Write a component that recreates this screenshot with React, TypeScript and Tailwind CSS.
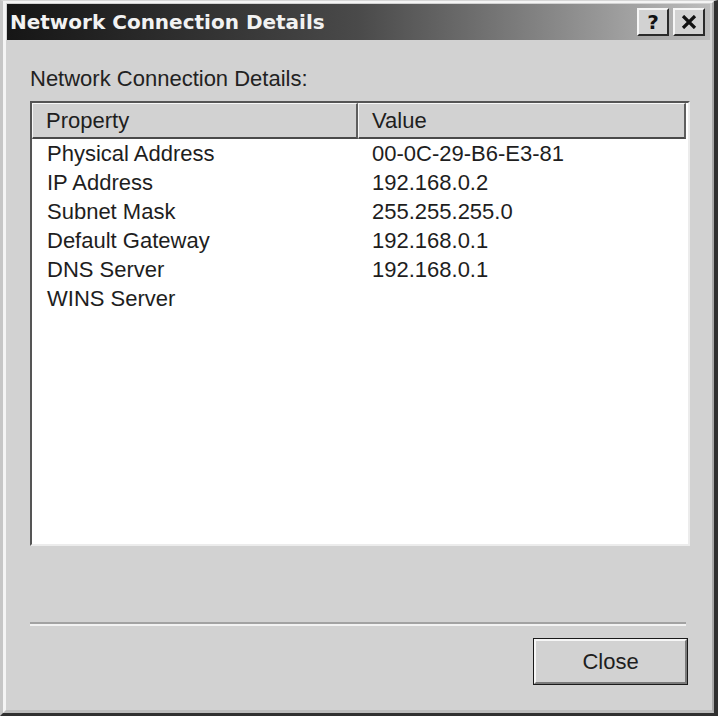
const SANS = { fontFamily: '"Liberation Sans", Arial, sans-serif' }

const ROWS = [
  { name: 'Physical Address', value: '00-0C-29-B6-E3-81' },
  { name: 'IP Address', value: '192.168.0.2' },
  { name: 'Subnet Mask', value: '255.255.255.0' },
  { name: 'Default Gateway', value: '192.168.0.1' },
  { name: 'DNS Server', value: '192.168.0.1' },
  { name: 'WINS Server', value: '' },
]

function CaptionButton({ children }: { children: React.ReactNode }) {
  return (
    <div className="flex h-[28px] w-[32px] items-center justify-center border-t-[2px] border-l-[2px] border-r-[2px] border-b-[2px] border-t-[#f6f6f6] border-l-[#f6f6f6] border-r-[#2a2a2a] border-b-[#2a2a2a] bg-[#d2d2d2]">
      {children}
    </div>
  )
}

function HeaderCell({ label, width }: { label: string; width: string }) {
  return (
    <div
      className={`${width} h-full border-t border-l border-r-[2px] border-b-[2px] border-t-[#f8f8f8] border-l-[#f8f8f8] border-r-[#5e5e5e] border-b-[#4a4a4a] bg-[#d2d2d2] pt-[2px] pl-[13px] text-[22px] leading-[29px] text-[#1e1e1e]`}
    >
      {label}
    </div>
  )
}

export default function App() {
  return (
    <div
      className="flex h-[716px] w-[718px] border-t-[1px] border-l-[3px] border-r-[4px] border-b-[3px] border-t-[#d6d6d6] border-l-[#c6c6c6] border-r-[#303030] border-b-[#303030] bg-[#d2d2d2]"
      style={SANS}
    >
      <div className="flex flex-1 flex-col border-t-[2px] border-l-[3px] border-r-[2px] border-b-[3px] border-t-[#f4f4f4] border-l-[#f4f4f4] border-r-[#a8a8a8] border-b-[#bcbcbc]">
        {/* title bar */}
        <div className="mt-[1px] ml-[1px] mr-[2px] flex h-[36px] items-center justify-between bg-gradient-to-r from-[#161616] via-[#4a4a4a] to-[#bdbdbd] pl-[3px] pr-[5px]">
          <span
            className="text-[20px] font-bold leading-none text-[#f2f2f2]"
            style={{ fontFamily: '"DejaVu Sans", Verdana, sans-serif' }}
          >
            Network Connection Details
          </span>
          <div className="flex gap-[4px]">
            <CaptionButton>
              <span
                className="text-[20px] font-bold leading-none text-[#111]"
                style={{ fontFamily: '"DejaVu Sans", Verdana, sans-serif' }}
              >
                ?
              </span>
            </CaptionButton>
            <CaptionButton>
              <svg width="16" height="14" viewBox="0 0 16 14">
                <path d="M2 1 L14 13 M14 1 L2 13" stroke="#111" strokeWidth="3.2" />
              </svg>
            </CaptionButton>
          </div>
        </div>

        {/* body */}
        <div className="flex flex-1 flex-col pl-[24px] pr-[22px]">
          <div className="mt-[26px] text-[22px] leading-[26px] text-[#222]">Network Connection Details:</div>

          <div className="mt-[9px] flex h-[445px] flex-col border-t-[2px] border-l-[2px] border-r-[2px] border-b-[2px] border-t-[#555] border-l-[#555] border-r-[#ececec] border-b-[#ececec] bg-white">
            <div className="flex h-[36px] shrink-0">
              <HeaderCell label="Property" width="w-[326px]" />
              <HeaderCell label="Value" width="w-[328px]" />
            </div>
            {ROWS.map((r) => (
              <div key={r.name} className="flex h-[29px] text-[22px] leading-[29px] text-[#1e1e1e]">
                <div className="w-[326px] pl-[15px]">{r.name}</div>
                <div className="pl-[14px]">{r.value}</div>
              </div>
            ))}
          </div>

          <div className="mt-[76px] mr-[4px] h-[4px] border-t-[2px] border-b-[2px] border-t-[#a2a2a2] border-b-[#f2f2f2]" />

          <div className="mt-[12px] mr-[2px] flex h-[47px] w-[155px] self-end border border-[#1a1a1a]">
            <div className="flex flex-1 items-center justify-center border-t-[2px] border-l-[2px] border-r-[2px] border-b-[2px] border-t-[#f6f6f6] border-l-[#f6f6f6] border-r-[#7a7a7a] border-b-[#7a7a7a] bg-[#d2d2d2]">
              <span className="text-[22px] leading-none text-[#1e1e1e]">Close</span>
            </div>
          </div>
        </div>
      </div>
    </div>
  )
}
